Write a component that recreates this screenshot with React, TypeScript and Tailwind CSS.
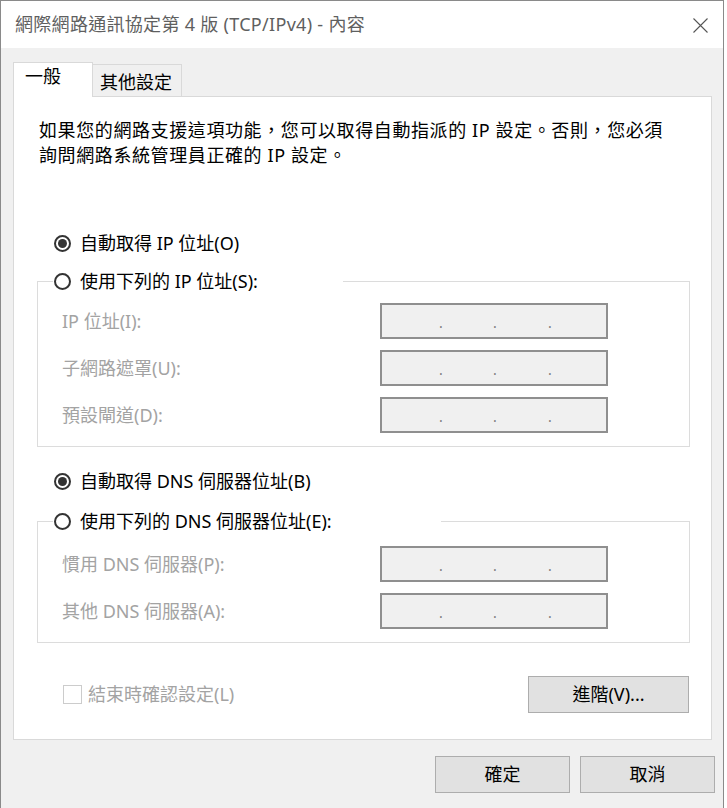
import type { ReactNode } from 'react';

const FONT = "font-['Noto_Sans','Noto_Sans_CJK_TC',sans-serif]";

function Radio({ checked, children }: { checked?: boolean; children: ReactNode }) {
  return (
    <div className="flex items-center h-[26px]">
      <span className="w-[17px] h-[17px] rounded-full border-2 border-[#333] flex items-center justify-center shrink-0">
        {checked && <span className="w-[9px] h-[9px] rounded-full bg-[#333]" />}
      </span>
      <span className="ml-[9px] text-[18px] leading-[26px] text-black">{children}</span>
    </div>
  );
}

function IpBox() {
  return (
    <div className="w-[228px] h-[36px] border-2 border-[#8f8f8f] bg-[#f0f0f0] flex pl-[57px] pt-[9px] text-[14px] leading-[18px] text-[#7d7d7d]">
      <span className="w-[54px]">.</span>
      <span className="w-[55px]">.</span>
      <span>.</span>
    </div>
  );
}

function FieldRow({ label }: { label: string }) {
  return (
    <div className="flex items-center h-[36px]">
      <span className="ml-[9px] w-[318px] text-[18px] text-[#a3a3a3]">{label}</span>
      <IpBox />
    </div>
  );
}

function Button({ children, className }: { children: ReactNode; className: string }) {
  return (
    <button className={`h-[37px] bg-[#e1e1e1] border border-[#adadad] text-[18px] text-black flex items-center justify-center ${className}`}>
      {children}
    </button>
  );
}

export default function App() {
  return (
    <div className={`w-[727px] h-[808px] bg-white ${FONT}`}>
      <div className="w-[724px] h-[808px] border-l border-t border-r border-[#8a8a8a] flex flex-col bg-[#f0f0f0]">
        {/* title bar */}
        <div className="h-[47px] bg-white flex items-center justify-between pl-[14px] pr-[15px]">
          <span className="text-[18px] tracking-[0.3px] text-[#5f5f5f]">網際網路通訊協定第 4 版 (TCP/IPv4) - 內容</span>
          <svg width="15" height="15" viewBox="0 0 15 15" className="mt-[2px]">
            <path d="M0.5 0.5L14.5 14.5M14.5 0.5L0.5 14.5" stroke="#555" strokeWidth="1.1" fill="none" />
          </svg>
        </div>

        <div className="pl-[12px] pr-[8px] pt-[14px]">
          {/* tabs */}
          <div className="flex items-end h-[34px]">
            <div className="relative z-10 w-[80px] h-[35px] -mb-px bg-white border border-b-0 border-[#d9d9d9] pl-[11px] pt-[1px] text-[18px] leading-[24px] text-black">
              一般
            </div>
            <div className="w-[89px] h-[32px] border-t border-r border-[#d9d9d9] bg-[#f0f0f0] pl-[7px] pt-[5px] text-[18px] leading-[24px] text-black">
              其他設定
            </div>
          </div>

          {/* panel */}
          <div className="w-[699px] bg-white border border-[#d9d9d9] pt-[21px] pl-[23px] pr-[21px] pb-[26px]">
            <p className="ml-[2px] text-[18px] leading-[25px] tracking-[0.6px] text-black">
              如果您的網路支援這項功能，您可以取得自動指派的 IP 設定。否則，您必須
              <br />
              詢問網路系統管理員正確的 IP 設定。
            </p>

            <div className="mt-[62px] ml-[17px]">
              <Radio checked>自動取得 IP 位址(O)</Radio>
            </div>

            <fieldset className="mt-[12px] border border-[#dcdcdc] px-[15px] pb-[13px]">
              <legend className="w-[290px] pl-[1px] bg-white">
                <Radio>使用下列的 IP 位址(S):</Radio>
              </legend>
              <div className="mt-[9px] flex flex-col gap-[11px]">
                <FieldRow label="IP 位址(I):" />
                <FieldRow label="子網路遮罩(U):" />
                <FieldRow label="預設閘道(D):" />
              </div>
            </fieldset>

            <div className="mt-[21px] ml-[17px]">
              <Radio checked>自動取得 DNS 伺服器位址(B)</Radio>
            </div>

            <fieldset className="mt-[14px] border border-[#dcdcdc] px-[15px] pb-[13px]">
              <legend className="w-[388px] pl-[1px] bg-white">
                <Radio>使用下列的 DNS 伺服器位址(E):</Radio>
              </legend>
              <div className="mt-[12px] flex flex-col gap-[11px]">
                <FieldRow label="慣用 DNS 伺服器(P):" />
                <FieldRow label="其他 DNS 伺服器(A):" />
              </div>
            </fieldset>

            <div className="mt-[33px] h-[37px] flex items-center justify-between">
              <div className="flex items-center ml-[26px]">
                <span className="w-[19px] h-[19px] border border-[#cccccc] bg-white" />
                <span className="ml-[6px] text-[18px] text-[#a3a3a3]">結束時確認設定(L)</span>
              </div>
              <Button className="w-[161px] mr-[1px]">進階(V)...</Button>
            </div>
          </div>

          {/* dialog buttons */}
          <div className="mt-[16px] flex justify-end gap-[10px]">
            <Button className="w-[135px]">確定</Button>
            <Button className="w-[135px]">取消</Button>
          </div>
        </div>
      </div>
    </div>
  );
}
